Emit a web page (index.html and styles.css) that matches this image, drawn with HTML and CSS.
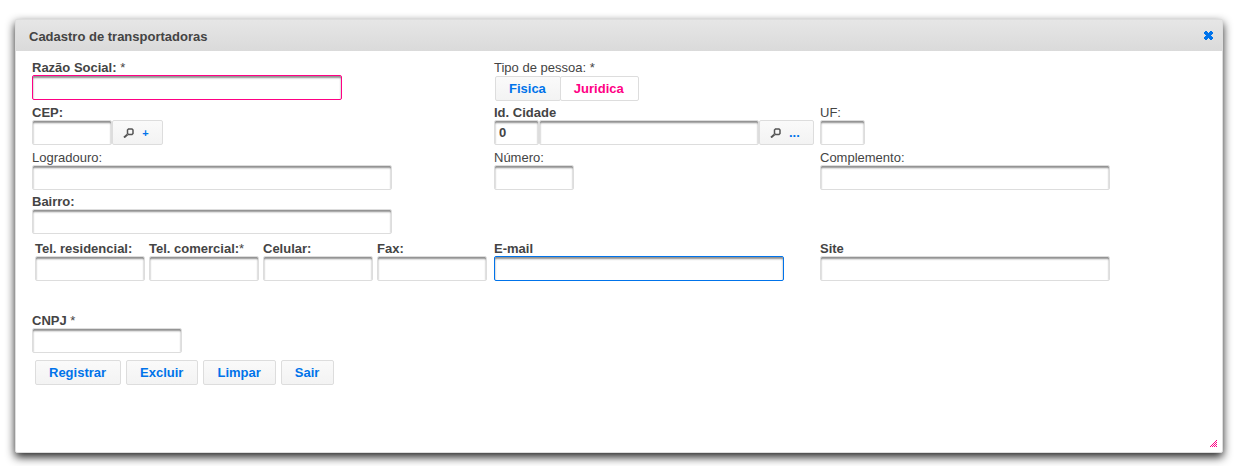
FILE: index.html
```html
<!DOCTYPE html>
<html lang="pt-BR">
<head>
<meta charset="utf-8">
<title>Cadastro de transportadoras</title>
<link rel="stylesheet" href="styles.css">
</head>
<body>
<section class="dialog" role="dialog" aria-labelledby="dialog-title">
  <header class="dialog-header">
    <h1 class="dialog-title" id="dialog-title">Cadastro de transportadoras</h1>
    <button class="dialog-close" type="button" aria-label="Fechar">
      <svg width="9" height="9" viewBox="0 0 9 9" shape-rendering="crispEdges"><path d="M1 0h2v1h1v1h1V1h1V0h2v1h1v2H8v1H7v1h1v1h1v2H8v1H6V8H5V7H4v1H3v1H1V8H0V6h1V5h1V4H1V3H0V1h1z"/></svg>
    </button>
  </header>
  <form class="form">
    <div class="row">
      <div class="field">
        <label class="label strong" for="razao">Razão Social: <span class="mark">*</span></label>
        <input class="input w-name invalid" id="razao" type="text">
      </div>
      <div class="field" role="group" aria-labelledby="tipo-label">
        <span class="label" id="tipo-label">Tipo de pessoa: *</span>
        <div class="toggle">
          <button class="button toggle-item" type="button" aria-pressed="false">Fisica</button>
          <button class="button toggle-item active" type="button" aria-pressed="true">Juridica</button>
        </div>
      </div>
    </div>
    <div class="row row-city">
      <div class="field">
        <label class="label strong" for="cep">CEP:</label>
        <div class="group">
          <input class="input w-short" id="cep" type="text">
          <button class="button lookup" type="button" aria-label="Buscar CEP">
            <svg class="lens" width="11" height="10" viewBox="0 0 11 10"><path d="M5.500 1H9l1 1v3.500l-1 1H5.500l-1-1V2z"/><path class="handle" d="M4.500 6.500L1 9.500"/></svg>
            <span class="plus">+</span>
          </button>
        </div>
      </div>
      <div class="field">
        <label class="label strong" for="cidade-id">Id. Cidade</label>
        <div class="group">
          <input class="input w-code" id="cidade-id" type="text" value="0">
          <input class="input w-city" type="text" aria-label="Cidade">
          <button class="button lookup" type="button" aria-label="Buscar cidade">
            <svg class="lens" width="11" height="10" viewBox="0 0 11 10"><path d="M5.500 1H9l1 1v3.500l-1 1H5.500l-1-1V2z"/><path class="handle" d="M4.500 6.500L1 9.500"/></svg>
            <span>...</span>
          </button>
        </div>
      </div>
      <div class="field">
        <label class="label" for="uf">UF:</label>
        <input class="input w-code" id="uf" type="text">
      </div>
    </div>
    <div class="row">
      <div class="field">
        <label class="label" for="logradouro">Logradouro:</label>
        <input class="input w-street" id="logradouro" type="text">
      </div>
      <div class="field">
        <label class="label" for="numero">Número:</label>
        <input class="input w-short" id="numero" type="text">
      </div>
      <div class="field">
        <label class="label" for="complemento">Complemento:</label>
        <input class="input w-long" id="complemento" type="text">
      </div>
    </div>
    <div class="row row-district">
      <div class="field">
        <label class="label strong" for="bairro">Bairro:</label>
        <input class="input w-street" id="bairro" type="text">
      </div>
    </div>
    <div class="row row-contact">
      <div class="phones">
        <div class="field">
          <label class="label strong" for="tel-res">Tel. residencial:</label>
          <input class="input w-phone" id="tel-res" type="tel">
        </div>
        <div class="field">
          <label class="label strong" for="tel-com">Tel. comercial:<span class="mark">*</span></label>
          <input class="input w-phone" id="tel-com" type="tel">
        </div>
        <div class="field">
          <label class="label strong" for="celular">Celular:</label>
          <input class="input w-phone" id="celular" type="tel">
        </div>
        <div class="field">
          <label class="label strong" for="fax">Fax:</label>
          <input class="input w-phone" id="fax" type="tel">
        </div>
      </div>
      <div class="field">
        <label class="label strong" for="email">E-mail</label>
        <input class="input w-long highlighted" id="email" type="email">
      </div>
      <div class="field">
        <label class="label strong" for="site">Site</label>
        <input class="input w-long" id="site" type="url">
      </div>
    </div>
    <div class="row row-document">
      <div class="field">
        <label class="label strong" for="cnpj">CNPJ <span class="mark">*</span></label>
        <input class="input w-document" id="cnpj" type="text">
      </div>
    </div>
    <div class="actions">
      <button class="button" type="button">Registrar</button>
      <button class="button" type="button">Excluir</button>
      <button class="button" type="button">Limpar</button>
      <button class="button" type="button">Sair</button>
    </div>
  </form>
  <svg class="resize-grip" width="7" height="7" viewBox="0 0 7 7" shape-rendering="crispEdges"><path d="M6 0h1v1H6zM5 1h1v1H5zM4 2h1v1H4zM6 2h1v1H6zM3 3h1v1H3zM5 3h1v1H5zM2 4h1v1H2zM4 4h1v1H4zM6 4h1v1H6zM1 5h1v1H1zM3 5h1v1H3zM5 5h1v1H5zM0 6h1v1H0zM2 6h1v1H2zM4 6h1v1H4zM6 6h1v1H6z"/></svg>
</section>
</body>
</html>
```
FILE: styles.css
```css
* {
  box-sizing: border-box;
}

body {
  margin: 0;
  padding: 19px 15px 13px;
  background: #fff;
  color: #444;
  font: 13px/16px "Liberation Sans", Arial, sans-serif;
}

.dialog {
  position: relative;
  border: 1px solid #ddd;
  border-radius: 2px;
  background: #fff;
  box-shadow: 0 4px 10px #222;
}

.dialog-header {
  display: flex;
  align-items: center;
  justify-content: space-between;
  height: 31px;
  padding: 3px 9px 0 13px;
  background: linear-gradient(#e6e6e6, #dadada);
}

.dialog-title {
  margin: 0;
  font-size: 13px;
  line-height: 16px;
}

.dialog-close {
  display: flex;
  margin-bottom: 4px;
  padding: 0;
  border: 0;
  background: none;
  fill: #0073ea;
}

.form {
  padding: 8px 16px 67px;
}

.row {
  display: grid;
  grid-template-columns: 462fr 326fr 386fr;
  margin-top: 4px;
}

.row:first-child {
  margin-top: 0;
}

.row-city,
.row-district {
  margin-top: 3px;
}

.row-contact {
  margin-top: 6px;
}

.row-document {
  margin-top: 31px;
}

.field {
  display: flex;
  flex-direction: column;
  align-items: flex-start;
  min-width: 0;
}

.label {
  padding-top: 1px;
  line-height: 15px;
  white-space: nowrap;
}

.strong {
  font-weight: bold;
}

.mark {
  font-weight: normal;
}

.input {
  height: 25px;
  max-width: 100%;
  padding: 0 4px 1px;
  border: 1px solid #ddd;
  border-radius: 2px;
  background: #fff;
  box-shadow: inset 0 2px 2px #8f8f8f;
  color: #444;
  font: bold 13px/16px "Liberation Sans", Arial, sans-serif;
}

.invalid {
  border-color: #ff0084;
}

.highlighted {
  border-color: #0073ea;
}

.w-code { width: 45px; }
.w-short { width: 80px; }
.w-phone { width: 110px; }
.w-document { width: 150px; }
.w-city { width: 220px; }
.w-long { width: 290px; }
.w-name { width: 310px; }
.w-street { width: 360px; }

.group {
  display: flex;
}

.button {
  display: flex;
  align-items: center;
  height: 25px;
  padding: 0 14px 0 13px;
  border: 1px solid #ddd;
  border-radius: 2px;
  background: linear-gradient(#fafafa, #f3f3f3);
  color: #0073ea;
  font: bold 13px/16px "Liberation Sans", Arial, sans-serif;
}

.lookup {
  gap: 8px;
  padding: 0 13px 0 10px;
}

.lens {
  fill: none;
  stroke: #555;
  stroke-width: 1.5;
}

.handle {
  stroke-width: 2;
}

.plus {
  font-size: 11px;
  min-width: 7px;
}

.toggle {
  display: flex;
  padding: 1px 0 0 1px;
}

.toggle-item + .toggle-item {
  margin-left: -1px;
}

.active {
  background: #fff;
  color: #ff0084;
}

.phones {
  display: flex;
  gap: 4px;
  padding-left: 3px;
}

.actions {
  display: flex;
  gap: 5px;
  padding: 7px 3px 0;
}

.resize-grip {
  position: absolute;
  right: 5px;
  bottom: 5px;
  fill: #ff0084;
}
```
